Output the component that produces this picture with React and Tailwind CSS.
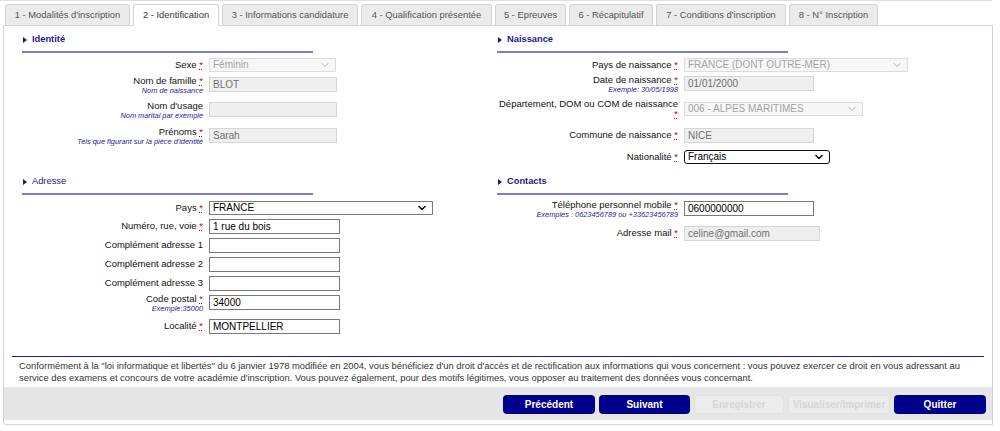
import React from "react";

const Req = () => (
  <span className="text-[#d40000] underline decoration-dotted decoration-[#d40000] underline-offset-[1px]">*</span>
);

function Chevron({ disabled }) {
  return (
    <svg width="8" height="5" viewBox="0 0 8 5" className="absolute right-[6px] top-1/2 -translate-y-1/2">
      <path
        d="M1 1 L4 4 L7 1"
        fill="none"
        stroke={disabled ? "#b0b0b0" : "#111"}
        strokeWidth={disabled ? "1" : "1.6"}
        strokeLinecap="round"
        strokeLinejoin="round"
      />
    </svg>
  );
}

function Select({ w, value, disabled, focus }) {
  const base = disabled
    ? "bg-[#f7f7f7] border border-[#dcdcdc] text-[#a3a3a3]"
    : focus
    ? "bg-white border-[1.5px] border-[#111] rounded-[3px] text-black"
    : "bg-white border border-[#7a7a7a] text-black";
  return (
    <div className={`relative h-[14px] ${w} ${base} pl-[3px] text-[10px] leading-[12px] whitespace-nowrap overflow-hidden`}>
      {value}
      <Chevron disabled={disabled} />
    </div>
  );
}

function Input({ w, value, disabled }) {
  const base = disabled
    ? "bg-[#efefef] border border-[#d6d6d6] text-[#707070]"
    : "bg-white border border-[#7a7a7a] text-black";
  return (
    <div className={`h-[15px] ${w} ${base} px-[3px] text-[10px] leading-[13px] whitespace-nowrap overflow-hidden`}>
      {value}
    </div>
  );
}

function Row({ label, sub, req, h, children, twoLine }) {
  return (
    <div className={`flex items-start ${h}`}>
      <div className={`w-[181px] shrink-0 text-right text-[9.5px] text-[#111] ${twoLine ? "-mt-[3px]" : sub ? "-mt-[2px]" : ""}`}>
        {twoLine ? (
          <div className="leading-[10px]">
            {label}
            <br />
            <Req />
          </div>
        ) : (
          <div className={sub ? "leading-[12px] whitespace-nowrap" : "leading-[14px] whitespace-nowrap"}>
            {label}
            {req && (
              <>
                {" "}
                <Req />
              </>
            )}
          </div>
        )}
        {sub && (
          <div className="text-[7.4px] italic leading-[8px] text-[#2424a0] whitespace-nowrap">{sub}</div>
        )}
      </div>
      <div className="ml-[6px]">{children}</div>
    </div>
  );
}

function Header({ title, bold }) {
  return (
    <div>
      <div className="flex items-center h-[13px]">
        <svg width="4" height="6" viewBox="0 0 4 6" className="ml-[1px]">
          <polygon points="0,0 4,3 0,6" fill="#1a1a6e" />
        </svg>
        <span className={`ml-[5px] text-[9.3px] leading-[13px] text-[#1b1b8c] ${bold ? "font-bold" : ""}`}>{title}</span>
      </div>
      <div className="mt-[5px] w-[291px] h-[2px] bg-[#7d7dc9]" />
    </div>
  );
}

const tabs = [
  { t: "1 - Modalités d'inscription", w: "w-[125px]" },
  { t: "2 - Identification", w: "w-[86px]", active: true },
  { t: "3 - Informations candidature", w: "w-[136px]" },
  { t: "4 - Qualification présentée", w: "w-[131px]" },
  { t: "5 - Epreuves", w: "w-[71px]" },
  { t: "6 - Récapitulatif", w: "w-[84px]" },
  { t: "7 - Conditions d'inscription", w: "w-[130px]" },
  { t: "8 - N° Inscription", w: "w-[89px]" },
];

function Button({ label, w, disabled }) {
  return (
    <div
      className={`${w} h-[19px] rounded-[4px] flex items-center justify-center text-[10px] font-bold ${
        disabled ? "bg-[#ececec] text-[#d6d6d6] border border-[#e2e2e2]" : "bg-[#00008a] text-white"
      }`}
    >
      {label}
    </div>
  );
}

export default function App() {
  return (
    <div className="w-[1000px] h-[431px] bg-white font-['Liberation_Sans',Arial,sans-serif] text-[9.4px] overflow-hidden">
      <div className="w-[992px] h-px bg-[#dedede]" />
      <div className="ml-[5px] mt-[3px] flex items-start gap-[3px] h-[21px] relative z-10">
        {tabs.map((tab) => (
          <div
            key={tab.t}
            className={`${tab.w} ${
              tab.active ? "h-[22px] bg-white text-[#333]" : "h-[21px] bg-[#ebebeb] text-[#555]"
            } rounded-t-[3px] border border-b-0 border-[#d3d3d3] text-center leading-[20px] whitespace-nowrap`}
          >
            {tab.t}
          </div>
        ))}
      </div>
      <div className="ml-[3px] w-[990px] h-[400px] border border-[#d4d4d4] rounded-bl-[3px] bg-white">
        <div className="pt-[7px] pl-[18px] h-[330px]">
          <div className="grid grid-cols-[475px_475px] grid-rows-[142px_181px]">
            {/* Identité */}
            <div>
              <Header title="Identité" bold />
              <div className="mt-[5px]">
                <Row label="Sexe" req h="h-[19px]">
                  <Select w="w-[127px]" value="Féminin" disabled />
                </Row>
                <Row label="Nom de famille" req sub="Nom de naissance" h="h-[25px]">
                  <Input w="w-[128px]" value="BLOT" disabled />
                </Row>
                <Row label="Nom d'usage" sub="Nom marital par exemple" h="h-[26px]">
                  <Input w="w-[128px]" value="" disabled />
                </Row>
                <Row label="Prénoms" req sub="Tels que figurant sur la pièce d'identité" h="h-[20px]">
                  <Input w="w-[128px]" value="Sarah" disabled />
                </Row>
              </div>
            </div>
            {/* Naissance */}
            <div>
              <Header title="Naissance" bold />
              <div className="mt-[5px]">
                <Row label="Pays de naissance" req h="h-[18px]">
                  <Select w="w-[224px]" value="FRANCE (DONT OUTRE-MER)" disabled />
                </Row>
                <Row label="Date de naissance" req sub="Exemple: 30/05/1998" h="h-[26px]">
                  <Input w="w-[130px]" value="01/01/2000" disabled />
                </Row>
                <Row label="Département, DOM ou COM de naissance" twoLine h="h-[26px]">
                  <Select w="w-[179px]" value="006 - ALPES MARITIMES" disabled />
                </Row>
                <Row label="Commune de naissance" req h="h-[22px]">
                  <Input w="w-[130px]" value="NICE" disabled />
                </Row>
                <Row label="Nationalité" req h="h-[15px]">
                  <Select w="w-[146px]" value="Français" focus />
                </Row>
              </div>
            </div>
            {/* Adresse */}
            <div>
              <Header title="Adresse" />
              <div className="mt-[6px]">
                <Row label="Pays" req h="h-[18px]">
                  <Select w="w-[224px]" value="FRANCE" />
                </Row>
                <Row label="Numéro, rue, voie" req h="h-[19px]">
                  <Input w="w-[131px]" value="1 rue du bois" />
                </Row>
                <Row label="Complément adresse 1" h="h-[19px]">
                  <Input w="w-[131px]" value="" />
                </Row>
                <Row label="Complément adresse 2" h="h-[19px]">
                  <Input w="w-[131px]" value="" />
                </Row>
                <Row label="Complément adresse 3" h="h-[19px]">
                  <Input w="w-[131px]" value="" />
                </Row>
                <Row label="Code postal" req sub="Exemple:35000" h="h-[24px]">
                  <Input w="w-[131px]" value="34000" />
                </Row>
                <Row label="Localité" req h="h-[15px]">
                  <Input w="w-[131px]" value="MONTPELLIER" />
                </Row>
              </div>
            </div>
            {/* Contacts */}
            <div>
              <Header title="Contacts" bold />
              <div className="mt-[6px]">
                <Row label="Téléphone personnel mobile" req sub="Exemples : 0623456789 ou +33623456789" h="h-[25px]">
                  <Input w="w-[130px]" value="0600000000" />
                </Row>
                <Row label="Adresse mail" req h="h-[15px]">
                  <Input w="w-[136px]" value="celine@gmail.com" disabled />
                </Row>
              </div>
            </div>
          </div>
        </div>
        <div className="ml-[8px] w-[972px] h-px bg-[#1d1d8f]" />
        <div className="pl-[15px] pt-[3px] h-[30px] text-[9.4px] leading-[12px] text-[#333] whitespace-nowrap">
          Conformément à la "loi informatique et libertés" du 6 janvier 1978 modifiée en 2004, vous bénéficiez d'un droit d'accès et de rectification aux informations qui vous concernent : vous pouvez exercer ce droit en vous adressant au
          <br />
          service des examens et concours de votre académie d'inscription. Vous pouvez également, pour des motifs légitimes, vous opposer au traitement des données vous concernant.
        </div>
        <div className="h-[33px] bg-[#e6e6e6] flex justify-end items-start pt-[8px] pr-[6px] gap-[4px] rounded-bl-[3px]">
          <Button label="Précédent" w="w-[92px]" />
          <Button label="Suivant" w="w-[91px]" />
          <Button label="Enregistrer" w="w-[90px]" disabled />
          <Button label="Visualiser/imprimer" w="w-[102px]" disabled />
          <Button label="Quitter" w="w-[92px]" />
        </div>
      </div>
    </div>
  );
}
